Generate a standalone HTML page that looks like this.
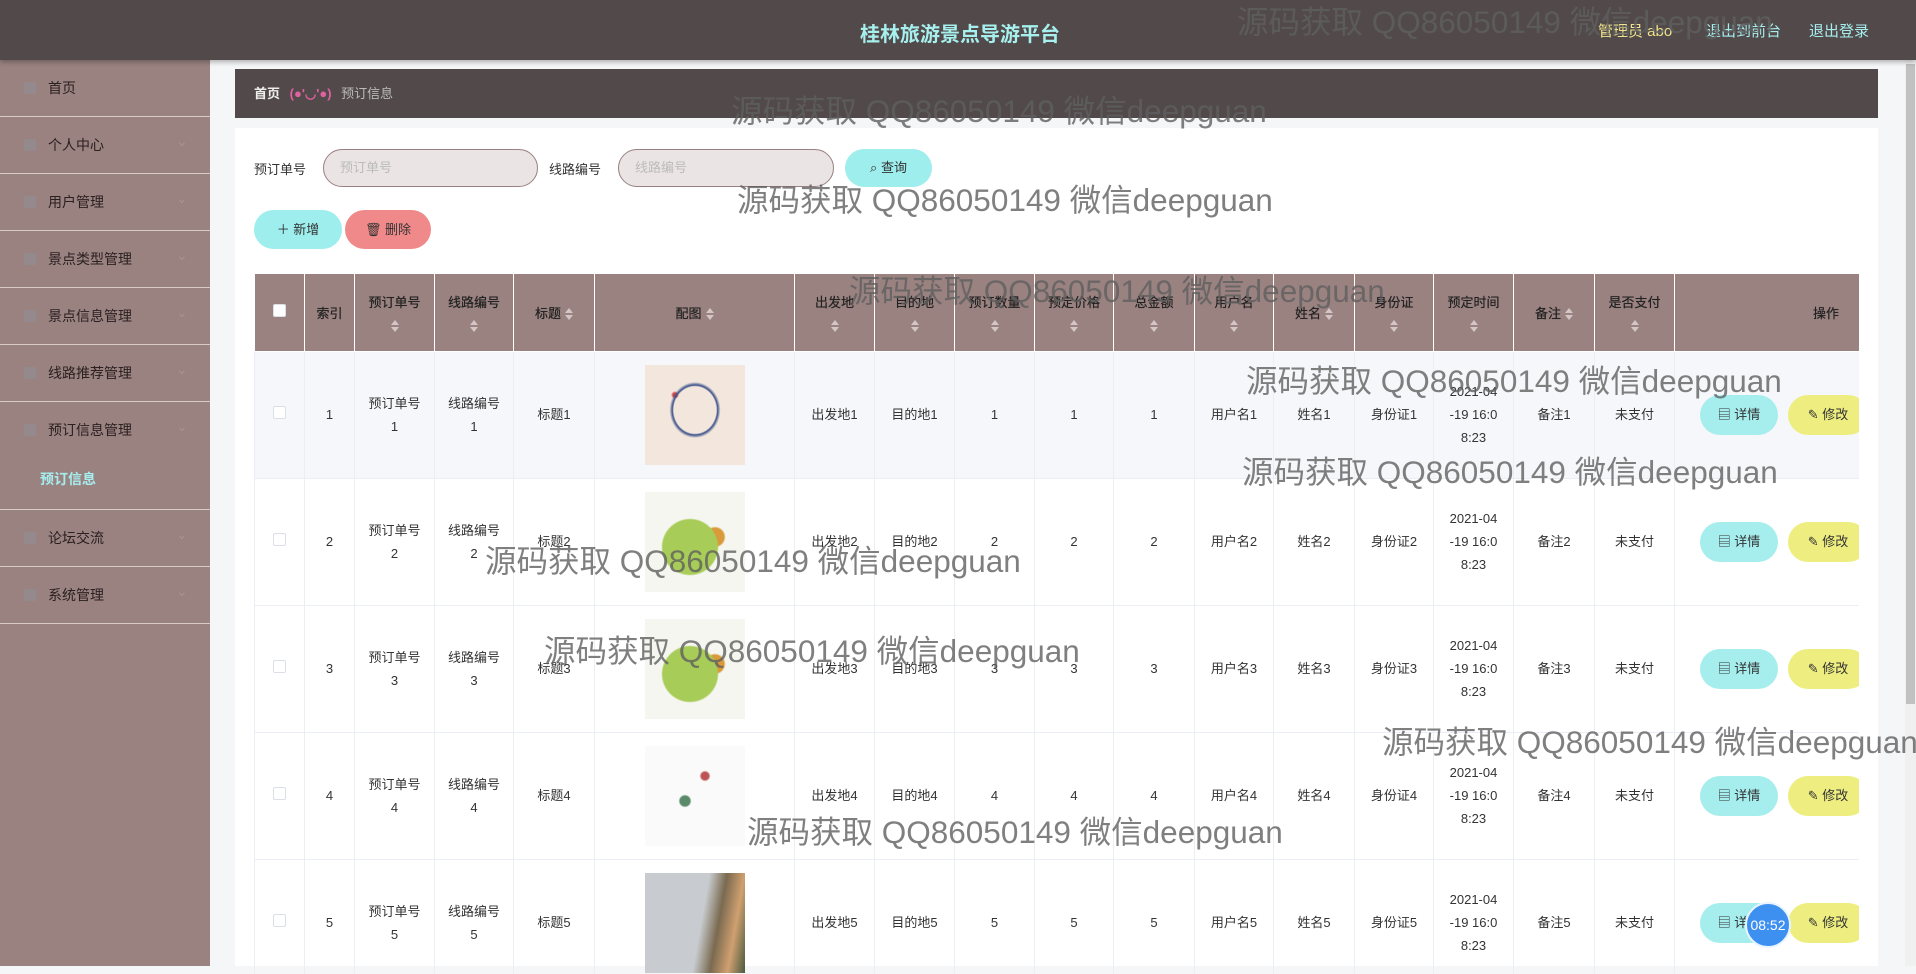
<!DOCTYPE html>
<html><head><meta charset="utf-8"><style>
*{margin:0;padding:0;box-sizing:border-box}
body{width:1916px;height:966px;overflow:hidden;background:#f5f6f8;font-family:"Liberation Sans","Noto Sans CJK SC",sans-serif;font-size:14px;color:#333;position:relative}
.top{position:absolute;left:0;top:0;width:1916px;height:60px;background:#524a4a;box-shadow:0 2px 5px rgba(0,0,0,.3);z-index:5}
.title{position:absolute;left:860px;top:18px;font-size:20px;font-weight:bold;color:#a6f0ee}
.side{position:absolute;left:0;top:60px;width:210px;height:906px;background:#9a8280}
.mi{height:57px;line-height:57px;border-bottom:1px solid #d9c9c7;padding-left:48px;color:#2a2020;font-size:14px;position:relative}
.mi:before{content:"";position:absolute;left:24px;top:22px;width:12px;height:12px;background:#8d8f98;opacity:.5;border-radius:2px}
.mi:after{content:"⌄";position:absolute;left:176px;top:-4px;color:#a89290;font-size:14px}
.mi.n:after{content:""}
.sub{height:51px;line-height:40px;padding-left:40px;color:#a6eeee;font-weight:bold;border-bottom:1px solid #d9c9c7}
.crumb{position:absolute;left:235px;top:69px;width:1643px;height:49px;background:#524a4a;line-height:49px;padding-left:19px;font-size:13px}
.panel{position:absolute;left:235px;top:128px;width:1643px;height:838px;background:#fff}
.lbl{position:absolute;font-size:13px;color:#333}
.inp{position:absolute;height:38px;border:1px solid #9a8080;border-radius:20px;background:#ebe4e4;color:#bbb;font-size:13px;line-height:36px;padding-left:16px}
.btn{position:absolute;border-radius:20px;font-size:13px;text-align:center;color:#333}
.wrap{position:absolute;left:254px;top:274px;width:1605px;height:700px;overflow:hidden}
table{border-collapse:collapse;table-layout:fixed;width:1605px}
th{background:#9a8280;height:77px;border:1px solid #fff;border-top:none;font-size:13px;color:#222;font-weight:normal;text-shadow:0 0 .5px #222;vertical-align:middle}
td{height:127px;border:1px solid #ebeef5;text-align:center;font-size:13px;color:#333;line-height:23px}
tr.h td{background:#f5f7fa}
.ar{display:block;margin:8px auto 0;width:8px;height:14px}
.ari{display:inline-block;vertical-align:middle;width:8px;height:14px;margin-left:4px}
.cb{display:inline-block;width:13px;height:13px;border:1px solid #dcdfe6;background:#fff;border-radius:2px}
.img{width:100px;height:100px;margin:0 auto}
.ops{text-align:left;white-space:nowrap;overflow:hidden}
.d{display:inline-block;width:78px;height:40px;line-height:40px;border-radius:20px;background:#a6eeee;margin-left:25px;text-align:center}
.m{display:inline-block;width:80px;height:40px;line-height:40px;border-radius:20px;background:#eeee80;margin-left:10px;text-align:center}
.wm{position:absolute;font-size:31.5px;color:rgba(95,95,95,.8);white-space:nowrap;z-index:10;font-family:"Liberation Sans","Noto Sans CJK SC",sans-serif}
</style></head><body>
<svg width="0" height="0" style="position:absolute"><defs><symbol id="s" viewBox="0 0 8 14"><path d="M4 1L8 6H0z M4 13L0 8H8z" fill="#d4c6c6"/></symbol></defs></svg>
<div class="top">
<div class="title">桂林旅游景点导游平台</div>
<div style="position:absolute;left:1598px;top:20px;color:#eee58e;font-size:15px">管理员 abo</div>
<div style="position:absolute;left:1706px;top:20px;color:#a6eeee;font-size:15px">退出到前台</div>
<div style="position:absolute;left:1809px;top:20px;color:#a6eeee;font-size:15px">退出登录</div>
</div>
<div class="side">
<div class="mi n">首页</div>
<div class="mi">个人中心</div>
<div class="mi">用户管理</div>
<div class="mi">景点类型管理</div>
<div class="mi">景点信息管理</div>
<div class="mi">线路推荐管理</div>
<div class="mi" style="border-bottom:none">预订信息管理</div>
<div class="sub">预订信息</div>
<div class="mi">论坛交流</div>
<div class="mi">系统管理</div>
</div>
<div class="crumb"><b style="color:#eee">首页</b> <span style="color:#e060a0;margin:0 6px;font-weight:bold">(●'◡'●)</span> <span style="color:#bbb">预订信息</span></div>
<div class="panel"></div>
<div class="lbl" style="left:254px;top:159px">预订单号</div>
<div class="inp" style="left:323px;top:149px;width:215px">预订单号</div>
<div class="lbl" style="left:549px;top:159px">线路编号</div>
<div class="inp" style="left:618px;top:149px;width:216px">线路编号</div>
<div class="btn" style="left:845px;top:149px;width:87px;height:38px;line-height:38px;background:#9eeeee">⌕ 查询</div>
<div class="btn" style="left:254px;top:210px;width:88px;height:39px;line-height:39px;background:#9eeeee">＋ 新增</div>
<div class="btn" style="left:345px;top:210px;width:86px;height:39px;line-height:39px;background:#f08a8a">🗑 删除</div>
<div class="wrap"><table>
<colgroup><col style="width:50px"><col style="width:50px"><col style="width:80px"><col style="width:79px"><col style="width:81px"><col style="width:200px"><col style="width:80px"><col style="width:80px"><col style="width:80px"><col style="width:79px"><col style="width:81px"><col style="width:79px"><col style="width:81px"><col style="width:79px"><col style="width:80px"><col style="width:81px"><col style="width:80px"><col style="width:185px"></colgroup>
<tr><th><span class="cb"></span></th><th>索引</th><th>预订单号<svg class="ar"><use href="#s"/></svg></th><th>线路编号<svg class="ar"><use href="#s"/></svg></th><th>标题<svg class="ari"><use href="#s"/></svg></th><th>配图<svg class="ari"><use href="#s"/></svg></th><th>出发地<svg class="ar"><use href="#s"/></svg></th><th>目的地<svg class="ar"><use href="#s"/></svg></th><th>预订数量<svg class="ar"><use href="#s"/></svg></th><th>预定价格<svg class="ar"><use href="#s"/></svg></th><th>总金额<svg class="ar"><use href="#s"/></svg></th><th>用户名<svg class="ar"><use href="#s"/></svg></th><th>姓名<svg class="ari"><use href="#s"/></svg></th><th>身份证<svg class="ar"><use href="#s"/></svg></th><th>预定时间<svg class="ar"><use href="#s"/></svg></th><th>备注<svg class="ari"><use href="#s"/></svg></th><th>是否支付<svg class="ar"><use href="#s"/></svg></th><th style="text-align:right;padding-right:20px">操作</th></tr>
<tr class="h"><td><span class="cb"></span></td><td>1</td><td>预订单号<br>1</td><td>线路编号<br>1</td><td>标题1</td><td><div class="img" style="background:#f3e6dc;background-image:radial-gradient(ellipse at 50% 45%,transparent 30%,#39508a 32%,transparent 36%),radial-gradient(circle at 30% 30%,#c44 2px,transparent 4px)"></div></td><td>出发地1</td><td>目的地1</td><td>1</td><td>1</td><td>1</td><td>用户名1</td><td>姓名1</td><td>身份证1</td><td>2021-04<br>-19 16:0<br>8:23</td><td>备注1</td><td>未支付</td><td class="ops"><span class="d">▤ 详情</span><span class="m">✎ 修改</span></td></tr>
<tr><td><span class="cb"></span></td><td>2</td><td>预订单号<br>2</td><td>线路编号<br>2</td><td>标题2</td><td><div class="img" style="background:#f6f6f0;background-image:radial-gradient(ellipse at 45% 55%,#a8cc58 35%,transparent 37%),radial-gradient(circle at 70% 45%,#d99a3a 10%,transparent 12%)"></div></td><td>出发地2</td><td>目的地2</td><td>2</td><td>2</td><td>2</td><td>用户名2</td><td>姓名2</td><td>身份证2</td><td>2021-04<br>-19 16:0<br>8:23</td><td>备注2</td><td>未支付</td><td class="ops"><span class="d">▤ 详情</span><span class="m">✎ 修改</span></td></tr>
<tr><td><span class="cb"></span></td><td>3</td><td>预订单号<br>3</td><td>线路编号<br>3</td><td>标题3</td><td><div class="img" style="background:#f6f6f0;background-image:radial-gradient(ellipse at 45% 55%,#a8cc58 35%,transparent 37%),radial-gradient(circle at 70% 45%,#d99a3a 10%,transparent 12%)"></div></td><td>出发地3</td><td>目的地3</td><td>3</td><td>3</td><td>3</td><td>用户名3</td><td>姓名3</td><td>身份证3</td><td>2021-04<br>-19 16:0<br>8:23</td><td>备注3</td><td>未支付</td><td class="ops"><span class="d">▤ 详情</span><span class="m">✎ 修改</span></td></tr>
<tr><td><span class="cb"></span></td><td>4</td><td>预订单号<br>4</td><td>线路编号<br>4</td><td>标题4</td><td><div class="img" style="background:#fafafa;background-image:radial-gradient(circle at 40% 55%,#5a8a6a 6%,transparent 8%),radial-gradient(circle at 60% 30%,#b55 4%,transparent 6%)"></div></td><td>出发地4</td><td>目的地4</td><td>4</td><td>4</td><td>4</td><td>用户名4</td><td>姓名4</td><td>身份证4</td><td>2021-04<br>-19 16:0<br>8:23</td><td>备注4</td><td>未支付</td><td class="ops"><span class="d">▤ 详情</span><span class="m">✎ 修改</span></td></tr>
<tr><td><span class="cb"></span></td><td>5</td><td>预订单号<br>5</td><td>线路编号<br>5</td><td>标题5</td><td><div class="img" style="background:linear-gradient(100deg,#c8ccd0 55%,#7a6a50 70%,#d0a070 85%,#4a5a40)"></div></td><td>出发地5</td><td>目的地5</td><td>5</td><td>5</td><td>5</td><td>用户名5</td><td>姓名5</td><td>身份证5</td><td>2021-04<br>-19 16:0<br>8:23</td><td>备注5</td><td>未支付</td><td class="ops"><span class="d">▤ 详情</span><span class="m">✎ 修改</span></td></tr>
</table></div>
<div style="position:absolute;left:1905px;top:60px;width:11px;height:906px;background:#f0f0f0"></div>
<div style="position:absolute;left:1906px;top:64px;width:9px;height:640px;background:#c1c1c1"></div>
<div style="position:absolute;left:1745px;top:902px;width:46px;height:46px;border-radius:50%;background:#3d8ff0;border:2px solid #e8f4ff;color:#fff;font-size:14px;line-height:42px;text-align:center;z-index:11">08:52</div>
<div class="wm" style="left:1237px;top:-3px">源码获取 QQ86050149 微信deepguan</div>
<div class="wm" style="left:731px;top:86px">源码获取 QQ86050149 微信deepguan</div>
<div class="wm" style="left:737px;top:175px">源码获取 QQ86050149 微信deepguan</div>
<div class="wm" style="left:849px;top:266px">源码获取 QQ86050149 微信deepguan</div>
<div class="wm" style="left:1246px;top:356px">源码获取 QQ86050149 微信deepguan</div>
<div class="wm" style="left:1242px;top:447px">源码获取 QQ86050149 微信deepguan</div>
<div class="wm" style="left:485px;top:536px">源码获取 QQ86050149 微信deepguan</div>
<div class="wm" style="left:544px;top:626px">源码获取 QQ86050149 微信deepguan</div>
<div class="wm" style="left:1382px;top:717px">源码获取 QQ86050149 微信deepguan</div>
<div class="wm" style="left:747px;top:807px">源码获取 QQ86050149 微信deepguan</div>
</body></html>
